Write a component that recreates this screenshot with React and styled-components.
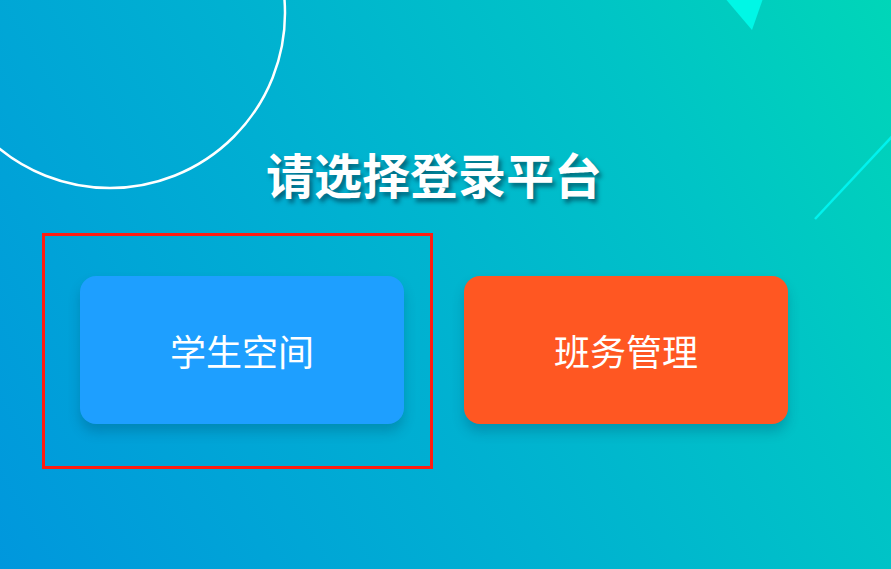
import React from 'react';
import styled, { createGlobalStyle } from 'styled-components';

const GlobalStyle = createGlobalStyle`
  html, body {
    margin: 0;
    padding: 0;
    height: 100%;
  }
  body {
    font-family: "Noto Sans CJK SC", "Noto Sans", sans-serif;
    overflow: hidden;
  }
`;

const Page = styled.div`
  position: relative;
  width: 100vw;
  height: 100vh;
  overflow: hidden;
  background: linear-gradient(60deg, #0097dd 0%, #00b1d1 45%, #00c4c6 75%, #00d6b8 100%);
`;

const Decor = styled.svg`
  position: absolute;
  inset: 0;
  width: 100%;
  height: 100%;
  pointer-events: none;
`;

const Stage = styled.div`
  position: relative;
  width: 708px;
  margin-left: 80px;
  padding-top: 145px;
  display: flex;
  flex-direction: column;
  align-items: center;
`;

const Title = styled.h1`
  margin: 0;
  font-size: 48px;
  line-height: 56px;
  font-weight: 700;
  color: #fff;
  text-shadow: 3px 4px 4px rgba(0, 40, 60, 0.55);
`;

const Cards = styled.div`
  margin-top: 75px;
  width: 100%;
  display: flex;
  gap: 60px;
`;

const CardSlot = styled.div`
  position: relative;
`;

const Card = styled.button`
  width: 324px;
  height: 148px;
  border: none;
  border-radius: 16px;
  background: ${p => p.$color};
  color: #fff;
  font-family: "Noto Sans CJK SC", sans-serif;
  font-size: 36px;
  font-weight: 400;
  box-shadow: 0 8px 12px rgba(0, 60, 90, 0.25);
  cursor: pointer;
  display: flex;
  align-items: center;
  justify-content: center;
  padding: 0;
`;

const Selection = styled.div`
  position: absolute;
  left: -38px;
  top: -43px;
  width: 385px;
  height: 230px;
  border: 3px solid #ff1c10;
  pointer-events: none;
`;

const platforms = [
  { name: '学生空间', color: '#1e9fff', selected: true },
  { name: '班务管理', color: '#ff5722' },
];

const App = () => (
  <>
    <GlobalStyle />
    <Page>
      <Decor viewBox="0 0 891 569" preserveAspectRatio="none">
        <circle cx="110" cy="13" r="175" fill="none" stroke="#fff" strokeWidth="2.5" />
        <polygon points="718,-10 766,-10 752,30" fill="#00f7e6" />
        <line x1="815" y1="219" x2="900" y2="128" stroke="#00f2ee" strokeWidth="2.5" />
      </Decor>
      <Stage>
        <Title>请选择登录平台</Title>
        <Cards>
          {platforms.map(p => (
            <CardSlot key={p.name}>
              <Card $color={p.color}>{p.name}</Card>
              {p.selected && <Selection />}
            </CardSlot>
          ))}
        </Cards>
      </Stage>
    </Page>
  </>
);

export default App;
